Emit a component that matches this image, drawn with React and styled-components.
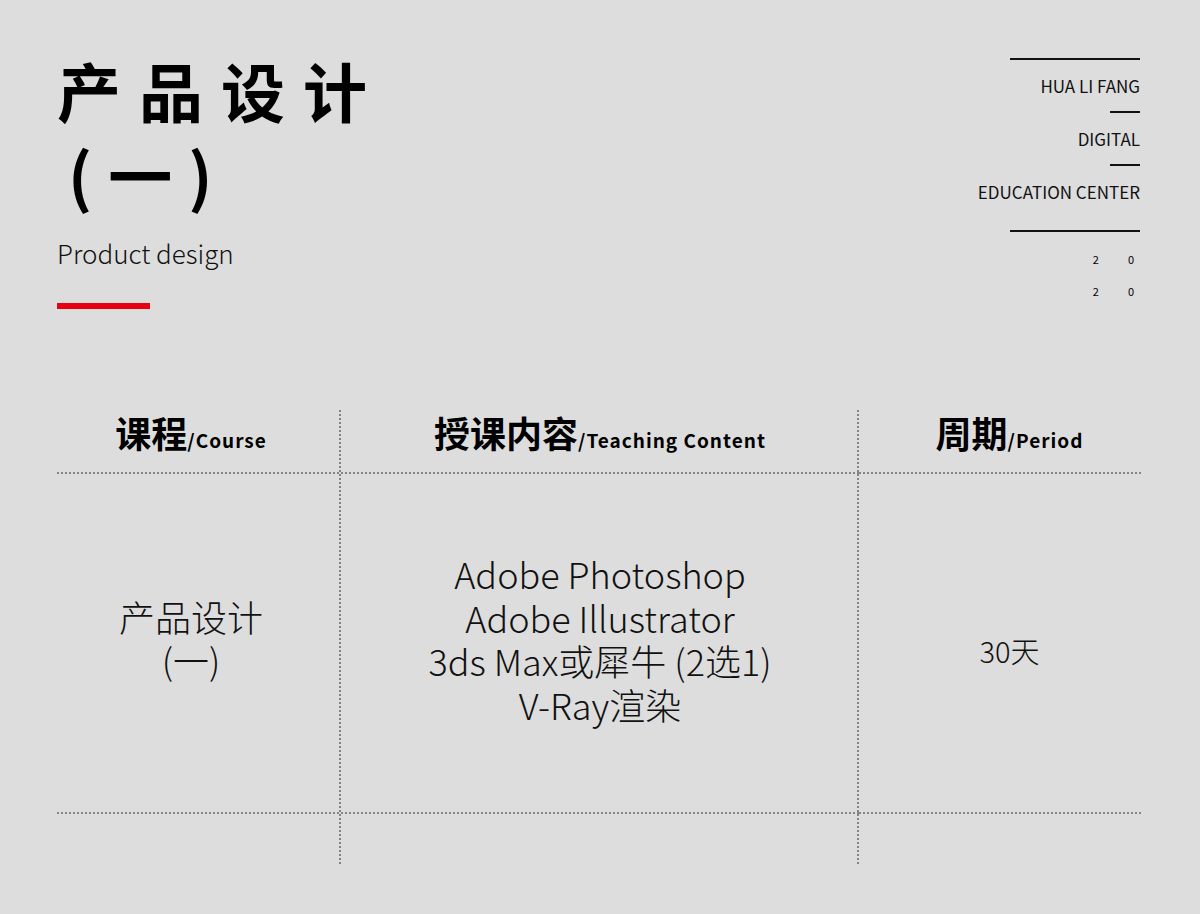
import React from "react";
import styled, { createGlobalStyle } from "styled-components";

const GlobalStyle = createGlobalStyle`
  body {
    margin: 0;
    background: #dddddd;
    font-family: "Noto Sans CJK SC", "Noto Sans", sans-serif;
    color: #000;
  }
`;

const columns = [
  { cn: "课程", en: "/Course", offset: "-16px" },
  { cn: "授课内容", en: "/Teaching Content", offset: "0px" },
  { cn: "周期", en: "/Period", offset: "18px" },
];

export default function App() {
  return (
    <Page>
      <GlobalStyle />
      <Top>
        <TitleBlock>
          <Title>产品设计</Title>
          <Title indent="11px" spacing="16px">(一)</Title>
          <Subtitle>Product design</Subtitle>
          <RedBar />
        </TitleBlock>
        <Brand>
          <Rule width="130px" />
          <BrandText>HUA LI FANG</BrandText>
          <Rule width="30px" />
          <BrandText>DIGITAL</BrandText>
          <Rule width="30px" />
          <BrandText>EDUCATION CENTER</BrandText>
          <Rule width="130px" gap="13px" />
          <Year>
            <span>2</span>
            <span>0</span>
          </Year>
          <Year>
            <span>2</span>
            <span>0</span>
          </Year>
        </Brand>
      </Top>

      <Table>
        {columns.map((c, i) => (
          <HeadCell key={c.en} last={i === 2} offset={c.offset}>
            <HeadCn>{c.cn}</HeadCn>
            <HeadEn>{c.en}</HeadEn>
          </HeadCell>
        ))}
        <BodyCell offset="-16px" shift="-12px">
          <CellText size="36px">
            产品设计
            <br />
            (一)
          </CellText>
        </BodyCell>
        <BodyCell offset="0px" shift="-10px">
          <CellText size="36px">
            Adobe Photoshop
            <br />
            Adobe Illustrator
            <br />
            3ds Max或犀牛 (2选1)
            <br />
            V-Ray渲染
          </CellText>
        </BodyCell>
        <BodyCell last offset="18px" shift="13px">
          <CellText size="29px">30天</CellText>
        </BodyCell>
        <FootCell />
        <FootCell />
        <FootCell last />
      </Table>
    </Page>
  );
}

const Page = styled.div`
  width: 1200px;
  height: 914px;
  box-sizing: border-box;
  padding: 47px 60px 0 57px;
`;

const Top = styled.div`
  display: flex;
  justify-content: space-between;
  align-items: flex-start;
  height: 363px;
`;

const TitleBlock = styled.div`
  display: flex;
  flex-direction: column;
`;

const Title = styled.div`
  font-size: 64px;
  font-weight: 700;
  line-height: 84px;
  letter-spacing: ${(p) => p.spacing || "18px"};
  padding-left: ${(p) => p.indent || "0"};
`;

const Subtitle = styled.div`
  font-size: 26px;
  font-weight: 300;
  line-height: 36px;
  margin-top: 20px;
  color: #111;
`;

const RedBar = styled.div`
  width: 93px;
  height: 6px;
  background: #e60012;
  margin-top: 32px;
`;

const Brand = styled.div`
  display: flex;
  flex-direction: column;
  align-items: flex-end;
  padding-top: 11px;
`;

const Rule = styled.div`
  width: ${(p) => p.width};
  height: 2px;
  background: #111;
  margin-top: ${(p) => p.gap || "0"};
`;

const BrandText = styled.div`
  font-size: 17px;
  font-weight: 400;
  line-height: 24px;
  margin: 14px 0 13px;
  color: #111;
`;

const Year = styled.div`
  display: flex;
  gap: 29px;
  font-size: 11px;
  line-height: 14px;
  margin-top: 20px;
  padding-right: 6px;
  & + & {
    margin-top: 18px;
  }
`;

const Table = styled.div`
  display: grid;
  grid-template-columns: 284px 518px 283px;
  grid-template-rows: 64px 340px 50px;
`;

const dotH = "repeating-linear-gradient(to right, #858585 0 2px, transparent 2px 4px)";
const dotV = "repeating-linear-gradient(to bottom, #858585 0 2px, transparent 2px 4px)";

const Cell = styled.div`
  box-sizing: border-box;
  background-repeat: no-repeat;
  background-image: ${(p) => [p.bottom && dotH, !p.last && dotV].filter(Boolean).join(", ") || "none"};
  background-size: ${(p) => [p.bottom && "100% 2px", !p.last && "2px 100%"].filter(Boolean).join(", ") || "auto"};
  background-position: ${(p) => [p.bottom && "left bottom", !p.last && "right top"].filter(Boolean).join(", ") || "0 0"};
`;

const HeadCell = styled(Cell).attrs({ bottom: true })`
  text-align: center;
  line-height: 44px;
  white-space: nowrap;
  padding-left: ${(p) => (parseInt(p.offset) > 0 ? p.offset : "0")};
  padding-right: ${(p) => (parseInt(p.offset) < 0 ? p.offset.slice(1) : "0")};
`;

const HeadCn = styled.span`
  font-size: 36px;
  font-weight: 700;
`;

const HeadEn = styled.span`
  font-size: 19px;
  font-weight: 700;
  letter-spacing: 1px;
`;

const BodyCell = styled(Cell).attrs({ bottom: true })`
  display: flex;
  align-items: center;
  justify-content: center;
  padding-top: ${(p) => (parseInt(p.shift) > 0 ? p.shift : "0")};
  padding-bottom: ${(p) => (parseInt(p.shift) < 0 ? p.shift.slice(1) : "0")};
  padding-left: ${(p) => (parseInt(p.offset) > 0 ? p.offset : "0")};
  padding-right: ${(p) => (parseInt(p.offset) < 0 ? p.offset.slice(1) : "0")};
`;

const CellText = styled.div`
  font-size: ${(p) => p.size};
  font-weight: 300;
  line-height: 43.5px;
  text-align: center;
  color: #111;
`;

const FootCell = styled(Cell)``;
